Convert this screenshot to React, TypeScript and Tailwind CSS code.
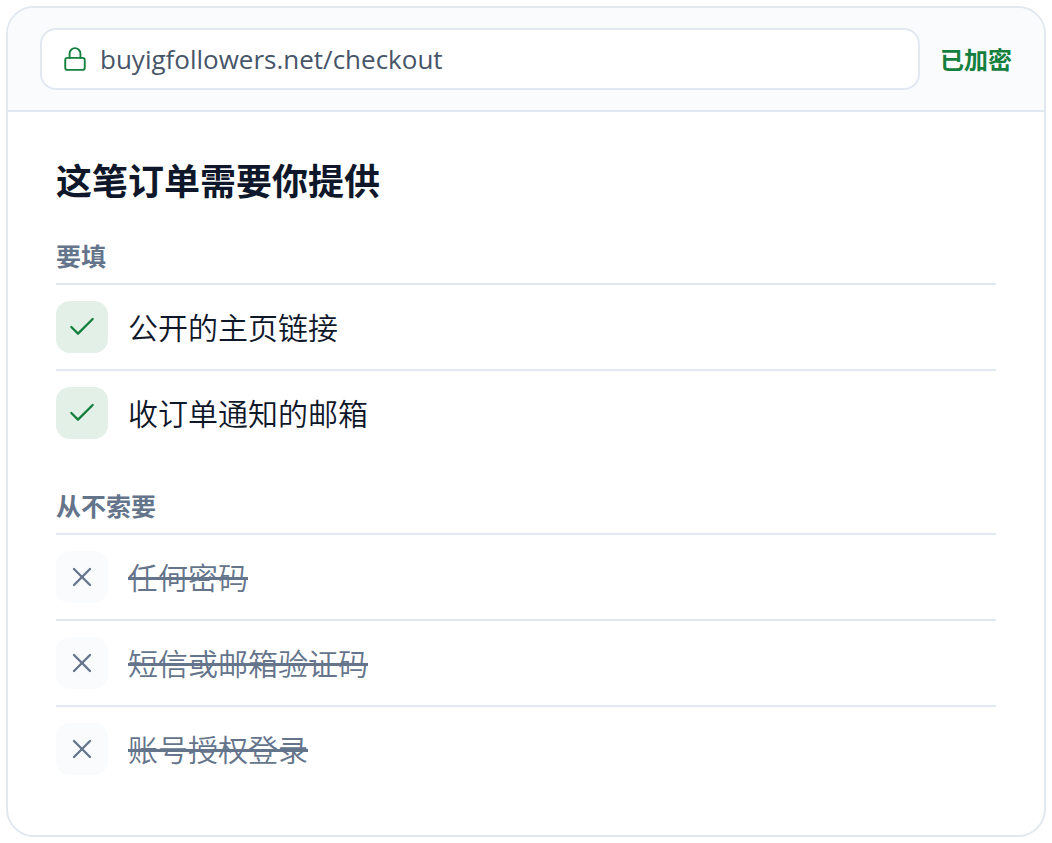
import React from "react";
import { Check, Lock, X } from "lucide-react";

const required = ["公开的主页链接", "收订单通知的邮箱"];
const neverAsked = ["任何密码", "短信或邮箱验证码", "账号授权登录"];

function SectionLabel({ children }: { children: React.ReactNode }) {
  return (
    <h2 className="pb-[7px] text-[25px] leading-[39px] font-bold text-[#64748b]">
      {children}
    </h2>
  );
}

function Row({ text, needed }: { text: string; needed: boolean }) {
  return (
    <li className="flex items-center gap-5 border-t-2 border-[#e2e8f0] py-4">
      <span
        className={
          needed
            ? "flex size-13 shrink-0 items-center justify-center rounded-[14px] bg-[#e3f0e8] text-[#15803d]"
            : "flex size-13 shrink-0 items-center justify-center rounded-[14px] bg-[#f9fbfd] text-[#64748b]"
        }
      >
        {needed ? <Check size={32} strokeWidth={1.75} /> : <X size={32} strokeWidth={1.75} />}
      </span>
      <span
        className={
          needed
            ? "pt-0.5 text-[30px] leading-10 font-[350] text-[#0f172a]"
            : "pt-0.5 text-[30px] leading-10 font-[350] text-[#64748b] line-through decoration-[3px]"
        }
      >
        {text}
      </span>
    </li>
  );
}

export default function App() {
  return (
    <div className="bg-white p-1.5 font-['Noto_Sans','Noto_Sans_CJK_SC',sans-serif]">
      <main className="overflow-hidden rounded-[28px] border-2 border-[#e2e8f0] bg-white">
        <header className="flex items-center gap-5 border-b-2 border-[#e2e8f0] bg-[#f9fbfd] px-8 py-5">
          <div className="flex min-w-0 flex-1 items-center gap-3 rounded-2xl border-2 border-[#e2e8f0] bg-white px-5 py-[9px]">
            <Lock size={26} strokeWidth={1.75} className="shrink-0 text-[#15803d]" />
            <span className="truncate font-['Open_Sans',sans-serif] text-[26px] leading-10 font-normal text-[#475569]">
              buyigfollowers.net/checkout
            </span>
          </div>
          <span className="shrink-0 pt-0.5 text-[24px] leading-10 font-bold text-[#15803d]">已加密</span>
        </header>
        <div className="px-12 py-11">
          <h1 className="mb-[30px] text-[36px] leading-[51px] font-bold text-[#0f172a]">
            这笔订单需要你提供
          </h1>
          <section>
            <SectionLabel>要填</SectionLabel>
            <ul>
              {required.map((text) => (
                <Row key={text} text={text} needed />
              ))}
            </ul>
          </section>
          <section className="mt-8">
            <SectionLabel>从不索要</SectionLabel>
            <ul>
              {neverAsked.map((text) => (
                <Row key={text} text={text} needed={false} />
              ))}
            </ul>
          </section>
        </div>
      </main>
    </div>
  );
}
